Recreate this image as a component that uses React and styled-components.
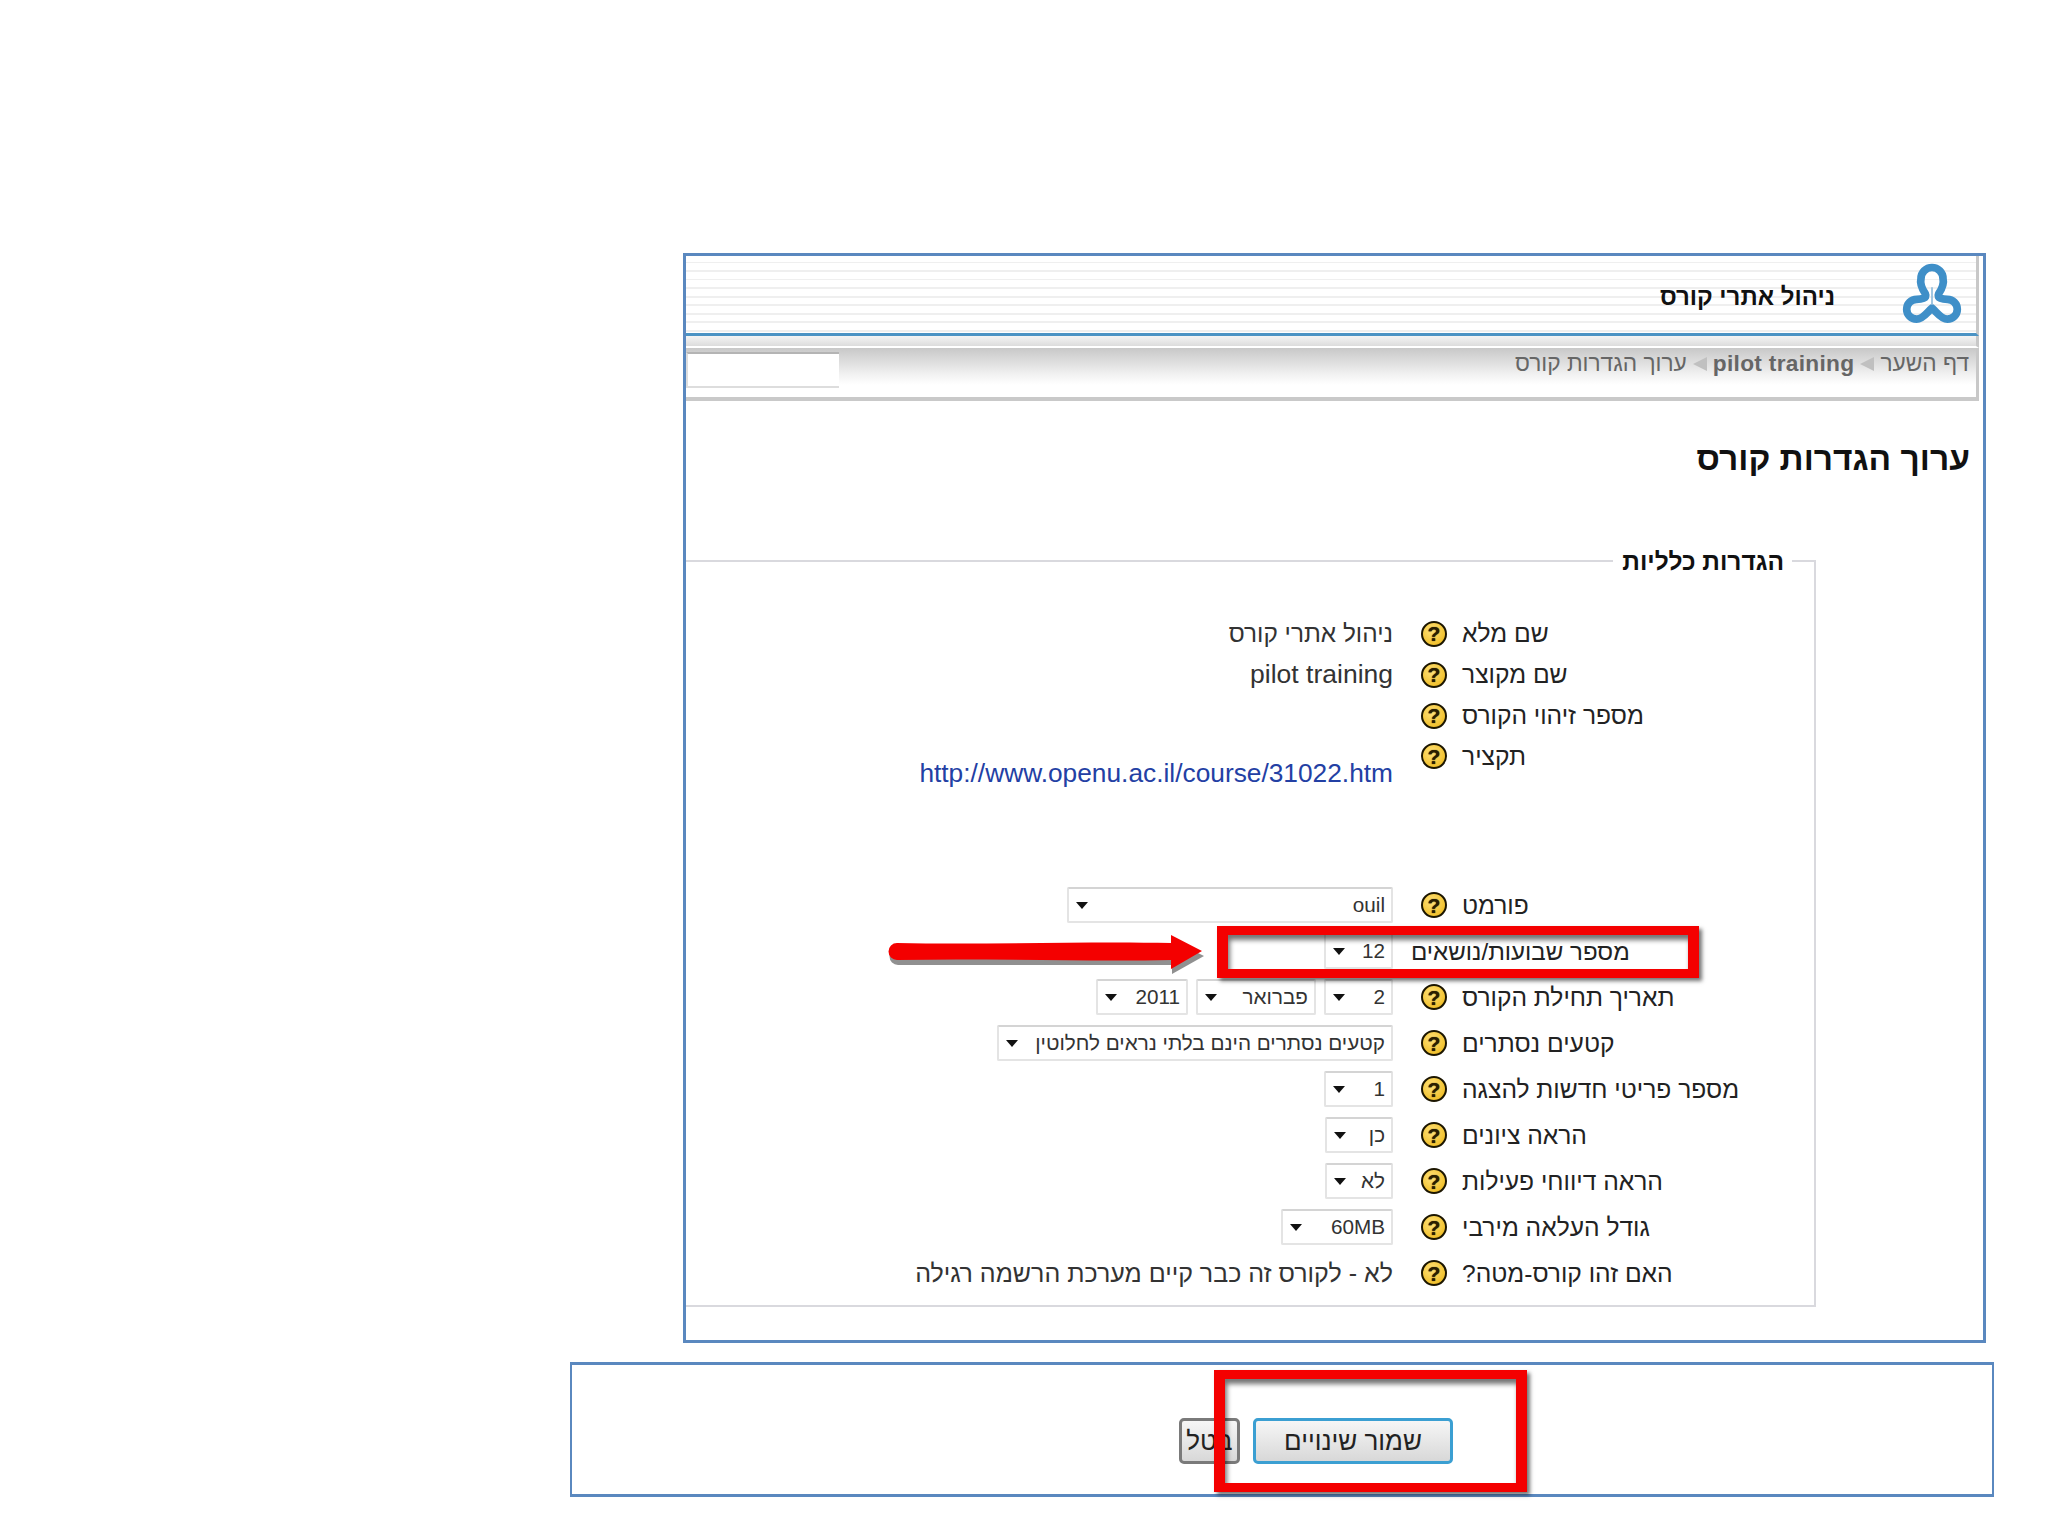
import React from 'react';
import styled, { createGlobalStyle } from 'styled-components';

const GlobalStyle = createGlobalStyle`
  html, body {
    margin: 0;
    padding: 0;
    background: #fff;
  }
  body {
    font-family: "Liberation Sans", Arial, sans-serif;
    color: #222;
  }
  * {
    box-sizing: border-box;
  }
`;

const Page = styled.div`
  width: 2048px;
  height: 1536px;
  padding: 253px 0 0 570px;
  overflow: hidden;
`;

const Panel = styled.div`
  position: relative;
  width: 1303px;
  height: 1090px;
  margin-left: 113px;
  border: 3px solid #5a88bf;
  direction: rtl;
`;

const Header = styled.div`
  display: flex;
  align-items: center;
  height: 80px;
  margin-right: 4px;
  border-right: 3px solid #c8c8c8;
  border-bottom: 3px solid #4b93c4;
  background: repeating-linear-gradient(#fff 0 6px, #efefef 6px 7.5px, #fff 7.5px 8.5px);
`;

const Logo = styled.svg`
  width: 66px;
  height: 66px;
  margin: 0 11px 0 0;
  flex: none;
`;

const CourseName = styled.div`
  margin: 4px 64px 0 0;
  font-size: 24px;
  font-weight: bold;
  color: #111;
`;

const Strip = styled.div`
  height: 12px;
  margin-right: 4px;
  border-right: 3px solid #c8c8c8;
  border-bottom: 2px solid #fff;
  background: linear-gradient(#f4f4f4, #dcdcdc);
`;

const NavBar = styled.div`
  display: flex;
  justify-content: space-between;
  height: 53px;
  margin-right: 4px;
  padding-right: 7px;
  border-right: 3px solid #c8c8c8;
  border-bottom: 4px solid #c9c9c9;
  background: linear-gradient(#c8c8c8, #f2f2f2 55%, #fff 75%);
`;

const Crumbs = styled.div`
  display: flex;
  align-items: center;
  gap: 6px;
  height: 31px;
  font-size: 22.7px;
  color: #666;
`;

const Crumb = styled.span`
  font-weight: ${(props) => (props.$strong ? 'bold' : 'normal')};
  letter-spacing: ${(props) => (props.$strong ? '0.3px' : '0')};
`;

const CrumbArrow = styled.span`
  width: 0;
  height: 0;
  border-top: 7px solid transparent;
  border-bottom: 7px solid transparent;
  border-right: 14px solid #c0c0c0;
`;

const SearchBox = styled.div`
  width: 153px;
  height: 36px;
  margin-top: 4px;
  background: #fff;
  border-top: 2px solid #b4b4b4;
  border-left: 2px solid #ddd;
  border-bottom: 2px solid #ddd;
`;

const Heading = styled.h2`
  margin: 38px 13px 67px 0;
  font-size: 33.5px;
  line-height: 40px;
  font-weight: bold;
  color: #111;
`;

const Fields = styled.fieldset`
  width: 1130px;
  height: 761px;
  margin: 0 167px 0 0;
  padding: 37px 0 0;
  min-width: 0;
  border: 2px solid #d9d9de;
  border-left: none;
`;

const Legend = styled.legend`
  margin-right: 22px;
  padding: 2px 8px 0 9px;
  font-size: 24.5px;
  line-height: 28px;
  font-weight: bold;
  color: #111;
`;

const Row = styled.div`
  display: flex;
  align-items: ${(props) => (props.$top ? 'flex-start' : 'center')};
  height: ${(props) => props.$h}px;
`;

const Label = styled.div`
  flex: none;
  width: ${(props) => (props.$wide ? 403 : 352)}px;
  margin-left: ${(props) => (props.$wide ? 18 : 0)}px;
  font-size: ${(props) => (props.$wide ? 24.1 : 24.6)}px;
  line-height: 41px;
  text-align: left;
  color: #222;
`;

const Help = styled.span`
  flex: none;
  display: flex;
  align-items: center;
  justify-content: center;
  width: 26px;
  height: 26px;
  margin: ${(props) => (props.$top ? '7px 15px 0 28px' : '0 15px 0 28px')};
  border: 2px solid #1c1600;
  border-radius: 50%;
  background: radial-gradient(circle at 40% 35%, #ffe27a, #f2c230 70%, #c99a10);
  font-size: 21px;
  font-weight: bold;
  line-height: 1;
  color: #2a1e00;
  text-shadow: 0 0 1px #2a1e00;
`;

const Value = styled.div`
  font-size: ${(props) => props.$size}px;
  line-height: 41px;
  white-space: nowrap;
  color: #333;
`;

const SummaryLink = styled.a`
  display: block;
  margin-top: 17px;
  font-size: 26.3px;
  line-height: 41px;
  direction: ltr;
  color: #2340a4;
  text-decoration: none;
`;

const SelectGroup = styled.div`
  display: flex;
  gap: 8px;
`;

const Select = styled.div`
  display: flex;
  align-items: center;
  justify-content: space-between;
  width: ${(props) => props.$w}px;
  height: 36px;
  padding: 0 6px 0 7px;
  background: #fff;
  border: 2px solid #e4e4e4;
  border-top-color: #d4d4d4;
  border-radius: 2px;
  font-size: 20.7px;
  color: #333;
  white-space: nowrap;
`;

const SelectArrow = styled.span`
  flex: none;
  width: 0;
  height: 0;
  border-left: 6px solid transparent;
  border-right: 6px solid transparent;
  border-top: 7px solid #111;
`;

const RedFrame = styled.div`
  position: absolute;
  left: ${(props) => props.$x}px;
  top: ${(props) => props.$y}px;
  width: ${(props) => props.$w}px;
  height: ${(props) => props.$h}px;
  border-style: solid;
  border-color: #f40000;
  border-width: 9px 11px;
  box-shadow: 3px 3px 4px rgba(0, 0, 0, 0.55), inset 2px 5px 5px rgba(0, 0, 0, 0.55);
  pointer-events: none;
`;

const RedArrow = styled.svg`
  position: absolute;
  left: 201px;
  top: 677px;
  width: 320px;
  height: 42px;
  overflow: visible;
`;

const ActionBox = styled.div`
  position: relative;
  display: flex;
  gap: 13px;
  width: 1424px;
  height: 135px;
  margin-top: 19px;
  padding: 53px 539px 0 0;
  border: 3px solid #5a88bf;
  border-width: 3px 2px;
  direction: rtl;
`;

const SaveButton = styled.button`
  width: 200px;
  height: 46px;
  padding: 0;
  border: 3px solid #3b9fd2;
  border-radius: 5px;
  background: linear-gradient(#f6f6f6, #d8d8d8);
  font-family: inherit;
  font-size: 26px;
  color: #222;
`;

const CancelButton = styled.button`
  width: 61px;
  height: 46px;
  padding: 0;
  border: 3px solid #7a7a7a;
  border-radius: 5px;
  background: linear-gradient(#f6f6f6, #d8d8d8);
  font-family: inherit;
  font-size: 26px;
  color: #222;
`;

const rows = [
  { label: 'פורמט', selects: [[326, 'ouil']] },
  { label: 'מספר שבועות/נושאים', wide: true, selects: [[69, '12']] },
  { label: 'תאריך תחילת הקורס', selects: [[69, '2'], [120, 'פברואר'], [92, '2011']] },
  { label: 'קטעים נסתרים', selects: [[396, 'קטעים נסתרים הינם בלתי נראים לחלוטין']] },
  { label: 'מספר פריטי חדשות להצגה', selects: [[69, '1']] },
  { label: 'הראה ציונים', selects: [[68, 'כן']] },
  { label: 'הראה דיווחי פעילות', selects: [[68, 'לא']] },
  { label: 'גודל העלאה מירבי', selects: [[112, '60MB']] },
];

const App = () => {
  return (
    <Page>
      <GlobalStyle />
      <Panel>
        <Header>
          <Logo viewBox="10 7 60 60">
            <path
              d="M34 36C30 30 29 26 30 22A10 10 0 0 1 50 22C51 26 50 30 46 36C44 40 50 41 54 41A8.5 8.5 0 0 1 54 59C48 59 44 52 40 49C36 52 32 59 26 59A8.5 8.5 0 0 1 26 41C30 41 36 40 34 36Z"
              fill="none"
              stroke="#3f8fc8"
              strokeWidth="7"
            />
            <path d="M40 30V46" stroke="#8fbcdc" strokeWidth="1.5" />
          </Logo>
          <CourseName>ניהול אתרי קורס</CourseName>
        </Header>
        <Strip />
        <NavBar>
          <Crumbs>
            <Crumb>דף השער</Crumb>
            <CrumbArrow />
            <Crumb $strong>pilot training</Crumb>
            <CrumbArrow />
            <Crumb>ערוך הגדרות קורס</Crumb>
          </Crumbs>
          <SearchBox />
        </NavBar>
        <Heading>ערוך הגדרות קורס</Heading>
        <Fields>
          <Legend>הגדרות כלליות</Legend>
          <Row $h={41}>
            <Label>שם מלא</Label>
            <Help>?</Help>
            <Value $size={24.4}>ניהול אתרי קורס</Value>
          </Row>
          <Row $h={41}>
            <Label>שם מקוצר</Label>
            <Help>?</Help>
            <Value $size={26.5}>pilot training</Value>
          </Row>
          <Row $h={41}>
            <Label>מספר זיהוי הקורס</Label>
            <Help>?</Help>
          </Row>
          <Row $h={146} $top>
            <Label>תקציר</Label>
            <Help $top>?</Help>
            <SummaryLink href="#">http://www.openu.ac.il/course/31022.htm</SummaryLink>
          </Row>
          {rows.map((row) => (
            <Row $h={46} key={row.label}>
              <Label $wide={row.wide}>{row.label}</Label>
              {!row.wide && <Help>?</Help>}
              <SelectGroup>
                {row.selects.map(([w, text]) => (
                  <Select $w={w} key={text}>
                    <span>{text}</span>
                    <SelectArrow />
                  </Select>
                ))}
              </SelectGroup>
            </Row>
          ))}
          <Row $h={46}>
            <Label>האם זהו קורס-מטה?</Label>
            <Help>?</Help>
            <Value $size={25}>לא - לקורס זה כבר קיים מערכת הרשמה רגילה</Value>
          </Row>
        </Fields>
        <RedFrame $x={531} $y={670} $w={482} $h={52} />
        <RedArrow viewBox="0 0 320 42">
          <path d="M10 12H284V4L316 20L284 38V29H10A8 8 0 0 1 10 12Z" fill="#222" opacity="0.5" transform="translate(1 3)" />
          <path d="M10 10C100 12 200 8 284 10V2L315 18L284 36V27C200 29 100 25 10 27A8.5 8.5 0 0 1 10 10Z" fill="#f40000" />
        </RedArrow>
      </Panel>
      <ActionBox>
        <SaveButton>שמור שינויים</SaveButton>
        <CancelButton>בטל</CancelButton>
        <RedFrame $x={642} $y={5} $w={313} $h={122} />
      </ActionBox>
    </Page>
  );
};

export default App;
